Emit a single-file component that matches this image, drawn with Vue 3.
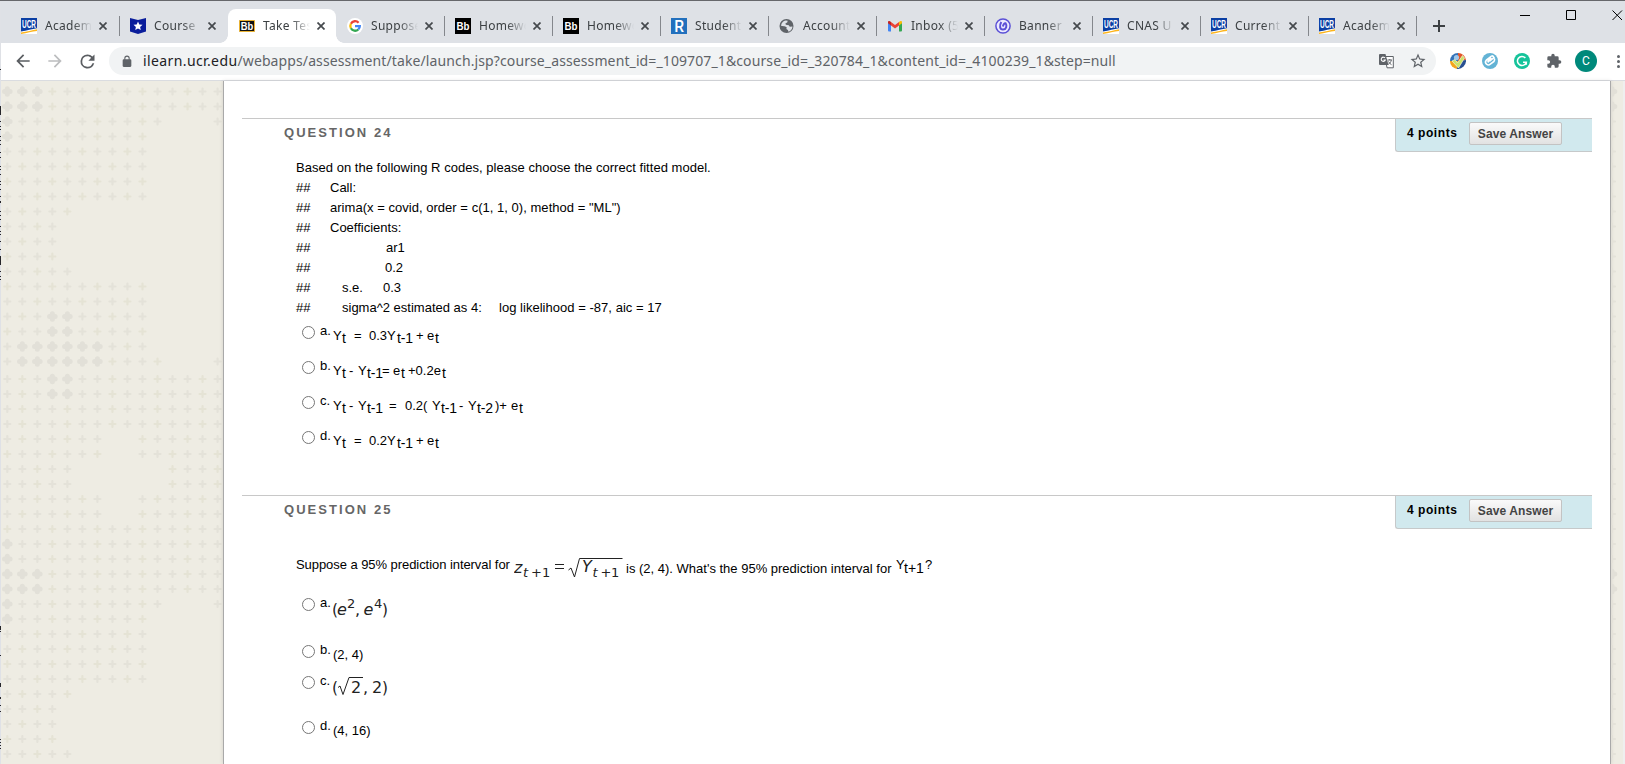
<script setup>
import { ref } from "vue";

const tabs = [
  { icon: "ucr", title: "Academic", wide: true },
  { icon: "star", title: "Course", sep: true, wide: true },
  { icon: "bbActive", title: "Take Test", active: true },
  { icon: "google", title: "Suppose" },
  { icon: "bb", title: "Homework", sep: true },
  { icon: "bb", title: "Homework", sep: true },
  { icon: "r", title: "Student", sep: true },
  { icon: "globe", title: "Account", sep: true },
  { icon: "gmail", title: "Inbox (5)", sep: true },
  { icon: "banner", title: "Banner", sep: true },
  { icon: "ucr", title: "CNAS U", sep: true },
  { icon: "ucr", title: "Current", sep: true },
  { icon: "ucr", title: "Academic", sep: true, last: true },
];

// background ornament: "o" is a large flower, "+" a small one
const full = "+".repeat(15);
const ten = "+".repeat(10);
const topRows = [
  "ooo++++++++++++", "ooo++++++++++++", "o++++++++++...+", "o+++++++++",
  ten, ten, ten, ten, "+++++", "++++", "++++", "++++", "+++++", ten, ten,
  "+++oo+++++", "+++oo+++++", "+oooooo+++", "+oooooo++++...+",
];
const bottomRows = [
  "+++oo++++++++++", "+++oo++++++++++", full, full, "+++++++..++++++", "+++++++..++++++",
  "+++++......++++", "+++++......++++", "+++++++..++++++", "+++++++..++++++", full,
  "o++++++++++++++", "o++++++++++++++", "ooo++++++++++++", "ooo++++++++++++",
  "o++++++++++...+", "o+++++++++", ten, ten, ten, ten, "+++++", "++++", "++++", "++++", "+++++",
];

function place(rows, startY) {
  const list = [];
  rows.forEach((row, r) => {
    [...row].forEach((c, i) => {
      if (c !== ".") list.push({ x: 6.3 + i * 15.02, y: startY + r * 15, big: c === "o" });
    });
  });
  return list;
}

const flowers = [...place(topRows, 10.5), ...place(bottomRows, 298)];
const edgeFlowers = [...topRows.map((_, i) => 10.5 + i * 15), ...bottomRows.map((_, i) => 298 + i * 15)].map(
  (y, i) => ({ y, big: [0, 1, 32, 33].includes(i) })
);

// [y, height] of the marks showing at the left window edge
const marks = [
  [69, 1], [106, 9], [121, 1], [126, 1], [129, 1], [136, 1], [140, 1], [144, 1], [152, 1], [157, 1],
  [166, 1], [169, 1], [174, 1], [181, 1], [184, 1], [189, 1], [196, 1], [201, 2], [211, 1], [215, 1],
  [219, 1], [226, 1], [231, 1], [234, 1], [241, 1], [249, 1], [256, 9], [271, 1], [276, 1], [279, 1],
  [626, 4], [631, 1], [655, 1], [683, 4], [697, 2], [705, 1], [711, 1], [739, 1], [742, 1], [745, 1], [748, 1],
];

// each piece starts x pixels after the line's left edge
const output = [
  [{ t: "Call:", x: 34 }],
  [{ t: 'arima(x = covid, order = c(1, 1, 0), method = "ML")', x: 34, loose: true }],
  [{ t: "Coefficients:", x: 34 }],
  [{ t: "ar1", x: 90 }],
  [{ t: "0.2", x: 89 }],
  [{ t: "s.e.", x: 46 }, { t: "0.3", x: 87 }],
  [{ t: "sigma^2 estimated as 4:", x: 46 }, { t: "log likelihood = -87, aic = 17", x: 203, loose: true }],
];

const models = [
  {
    key: "a",
    parts: [
      { t: "Y", w: 9 }, { t: "t", w: 12, sub: true }, { t: "=", w: 15 }, { t: "0.3Y", w: 28 },
      { t: "t-1", w: 19, sub: true }, { t: "+", w: 11 }, { t: "e", w: 8 }, { t: "t", w: 6, sub: true },
    ],
  },
  {
    key: "b",
    parts: [
      { t: "Y", w: 9 }, { t: "t", w: 7, sub: true }, { t: "-", w: 9 }, { t: "Y", w: 9 },
      { t: "t-1", w: 15, sub: true }, { t: "=", w: 11 }, { t: "e", w: 8 }, { t: "t", w: 7, sub: true },
      { t: "+0.2e", w: 34 }, { t: "t", w: 6, sub: true },
    ],
  },
  {
    key: "c",
    parts: [
      { t: "Y", w: 9 }, { t: "t", w: 7, sub: true }, { t: "-", w: 9 }, { t: "Y", w: 9 },
      { t: "t-1", w: 22, sub: true }, { t: "=", w: 16 }, { t: "0.2(", w: 27 }, { t: "Y", w: 9 },
      { t: "t-1", w: 18, sub: true }, { t: "-", w: 9 }, { t: "Y", w: 9 }, { t: "t-2", w: 18, sub: true },
      { t: ")+", w: 16 }, { t: "e", w: 8 }, { t: "t", w: 6, sub: true },
    ],
  },
  {
    key: "d",
    parts: [
      { t: "Y", w: 9 }, { t: "t", w: 12, sub: true }, { t: "=", w: 15 }, { t: "0.2Y", w: 28 },
      { t: "t-1", w: 19, sub: true }, { t: "+", w: 11 }, { t: "e", w: 8 }, { t: "t", w: 6, sub: true },
    ],
  },
];

const answer24 = ref("");
const answer25 = ref("");
</script>

<template>
  <div class="window">
    <!-- tab strip -->
    <div class="tab-strip">
      <div
        v-for="(tab, i) in tabs"
        :key="i"
        class="tab"
        :class="{ active: tab.active, divided: tab.sep, wide: tab.wide, last: tab.last }"
      >
        <svg class="favicon" viewBox="0 0 16 16">
          <template v-if="tab.icon === 'ucr'">
            <path fill="#fff" d="M0 0h16v16H0z" />
            <path fill="#0b3fa4" d="M0 0h16v10.3C11 11 6 12.500 0 13.500z" />
            <path fill="#fdb51c" d="M16 11.300V13C11 13.500 6 15 0 16v-1.500C6 13.500 11 12.500 16 11.300z" />
            <text x="1" y="7.400" transform="scale(1 1.300)" textLength="14" lengthAdjust="spacingAndGlyphs" class="ucr">UCR</text>
          </template>
          <template v-else-if="tab.icon === 'star'">
            <path fill="#0a1d9b" d="M0 0l8 2 8-2v13.500L8 16l-8-2.500z" />
            <path fill="#fff" d="M8 3.500l1.300 3 3.200.300-2.400 2.100.7 3.200L8 10.400l-2.800 1.700.7-3.200-2.400-2.100 3.200-.3z" />
          </template>
          <template v-else-if="tab.icon === 'bbActive'">
            <path fill="#111" stroke="#e9b233" d="M.5 2.500h15v11H.5z" />
            <text x="1.800" y="11.700" textLength="12.500" lengthAdjust="spacingAndGlyphs" class="bb">Bb</text>
          </template>
          <template v-else-if="tab.icon === 'google'">
            <circle cx="8" cy="8" r="8" fill="#fff" />
            <g fill="none" stroke-width="2.300">
              <path stroke="#ea4335" d="M3.900 5.700A4.800 4.800 0 0 1 11.600 4.700" />
              <path stroke="#fbbc05" d="M3.900 10.300a4.800 4.800 0 0 1 0-4.600" />
              <path stroke="#34a853" d="M11.300 11.500a4.800 4.800 0 0 1-7.400-1.200" />
              <path stroke="#4285f4" d="M8 8.200h4.800a4.800 4.800 0 0 1-1.500 3.300" />
            </g>
          </template>
          <template v-else-if="tab.icon === 'bb'">
            <path d="M0 0h16v16H0z" />
            <text x="1.500" y="12" textLength="13" lengthAdjust="spacingAndGlyphs" class="bb">Bb</text>
          </template>
          <template v-else-if="tab.icon === 'r'">
            <path fill="#2270bd" d="M0 0h16v16H0z" />
            <text x="3.500" y="14" textLength="9.500" lengthAdjust="spacingAndGlyphs" class="r">R</text>
          </template>
          <template v-else-if="tab.icon === 'globe'">
            <circle cx="7.500" cy="8" r="7" fill="#5f6368" />
            <path fill="#dee1e6" d="M2 7.800c.3-2.700 2.200-4.800 4.700-5.200l2 .2-.5 1.700-1.700.8.300 1.400 3 .5 1 1.600 2.700-.300c0 2.600-1.800 4.600-4 5.200l-.6-1.800-1.500-1 .3-1.700-1.800-.8z" />
            <path fill="#5f6368" d="M3.800 8.800h2.600l.4 2-1 .8z" />
          </template>
          <template v-else-if="tab.icon === 'gmail'">
            <path fill="#4285f4" d="M1 4.500l3 2.300V13.500H2q-1 0-1-1z" />
            <path fill="#34a853" d="M12 6.800l3-2.300v8q0 1-1 1h-2z" />
            <path fill="#ea4335" d="M4 4l4 3 4-3v3.500L8 10.500 4 7.500z" />
            <path fill="#c5221f" d="M1 4.500C1 2.700 2.700 2.700 4 4v3.500l-3-2.200z" />
            <path fill="#fbbc04" d="M15 4.500C15 2.700 13.300 2.700 12 4v3.500l3-2.200z" />
          </template>
          <template v-else>
            <circle cx="8" cy="8" r="7.100" fill="#eceaff" stroke="#5b50d6" stroke-width="1.500" />
            <path fill="none" stroke="#5b50d6" stroke-width="2" d="M6.300 4C4.200 7.500 4.700 11.700 8 11.600c3.300-.1 4.300-3.800 2.600-6.300C9.300 5 8.300 6.500 7.900 8.500" />
          </template>
        </svg>
        <span class="tab-title">{{ tab.title }}</span>
        <svg class="close" viewBox="0 0 8 8"><path d="M.5.5l7 7m0-7l-7 7" /></svg>
      </div>
      <svg class="new-tab" viewBox="0 0 12 12"><path d="M6 0v12M0 6h12" /></svg>
      <svg class="win-buttons" viewBox="0 0 103 12">
        <path d="M0 6.500h10M46.500 1.500h9v9h-9zM92.500 1.500l9.500 9.500m0-9.500l-9.500 9.500" />
      </svg>
    </div>

    <!-- toolbar -->
    <div class="toolbar">
      <svg class="nav back" viewBox="0 0 24 24"><path d="M20 11H7.830l5.590-5.590L12 4l-8 8 8 8 1.410-1.410L7.830 13H20z" /></svg>
      <svg class="nav forward" viewBox="0 0 24 24"><path d="M4 11h12.170l-5.590-5.590L12 4l8 8-8 8-1.410-1.410L16.170 13H4z" /></svg>
      <svg class="nav reload" viewBox="0 0 24 24">
        <path d="M17.650 6.350A7.960 7.960 0 0 0 12 4a8 8 0 1 0 7.730 10h-2.080A6 6 0 1 1 12 6c1.660 0 3.140.690 4.220 1.780L13 11h7V4z" />
      </svg>
      <div class="omnibox">
        <svg class="lock" viewBox="0 0 24 24">
          <path d="M18 8h-1V6A5 5 0 0 0 7 6v2H6a2 2 0 0 0-2 2v10c0 1.100.900 2 2 2h12a2 2 0 0 0 2-2V10a2 2 0 0 0-2-2zM9 6a3 3 0 0 1 6 0v2H9z" />
        </svg>
        <span class="url"><span class="host">ilearn.ucr.edu</span>/webapps/assessment/take/launch.jsp?course_assessment_id=_109707_1&amp;course_id=_320784_1&amp;content_id=_4100239_1&amp;step=null</span>
        <svg class="translate" viewBox="0 0 15 15">
          <path fill="#fff" stroke="#5f6368" d="M6 2.500h8.300v11.300H8z" />
          <path fill="#5f6368" d="M1 0h5.500l3 11H1q-1 0-1-1V1q0-1 1-1z" />
          <path fill="none" stroke="#fff" stroke-width="1.100" d="M6 4a2.100 2.100 0 1 0 .3 2H4.500" />
          <path fill="none" stroke="#5f6368" d="M8.500 6h4.500M10.800 5v1M12.300 6.200c-.5 2-1.500 3.300-3 4M9.500 7.500c.7 1.500 1.800 2.500 3 3.200" />
        </svg>
        <svg class="bookmark" viewBox="0 0 24 24">
          <path d="M22 9.240l-7.190-.620L12 2 9.190 8.630 2 9.240l5.460 4.730L5.820 21 12 17.270 18.180 21l-1.630-7.030zM12 15.400l-3.760 2.270 1-4.280-3.320-2.880 4.380-.380L12 6.100l1.710 4.040 4.380.380-3.320 2.880 1 4.280z" />
        </svg>
      </div>
      <div class="extensions">
        <svg viewBox="0 0 16 16">
          <path fill="#3372b8" d="M8 0A8 8 0 0 0 0 8l8 1z" />
          <path fill="#e2562b" d="M8 0a8 8 0 0 1 8 7L8 9z" />
          <path fill="#f3a51e" d="M0 8a8 8 0 0 0 7 8l2-8z" />
          <path fill="#284f91" d="M16 7a8.500 8.500 0 0 1-9 9l1-8z" />
          <circle cx="6.500" cy="4.500" r="2.600" fill="#9fc8ea" />
          <path fill="#c9e36a" stroke="#f7f9d8" stroke-width=".7" d="M2 8l3-1.500 2.500 3.500L12.500 2.500l2 2.500L8.500 15z" />
        </svg>
        <svg viewBox="0 0 16 16">
          <circle cx="8" cy="8" r="8" fill="#63b3d5" />
          <path fill="none" stroke="#fff" stroke-width="1.600" d="M9.500 3L4.300 7.200q-1.800 2 .2 4 2 1.500 3.800 0L12.500 8M9.500 3q1.500-.5 2.500 1.500L7.300 8.500M12.300 5.500q.8 1.500-.3 2.500M9.500 5L6.300 7.500q-.8 1.200.5 1.800" />
        </svg>
        <svg viewBox="0 0 16 16">
          <circle cx="8" cy="8" r="8" fill="#15c39a" />
          <path fill="none" stroke="#fff" stroke-width="1.500" d="M11.300 4.900A4.500 4.500 0 1 0 12.300 9.200H9M12.300 8.500v3.300" />
        </svg>
        <svg viewBox="0 0 24 24">
          <path fill="#5f6368" d="M20.500 11H19V7a2 2 0 0 0-2-2h-4V3.500a2.500 2.500 0 0 0-5 0V5H4a2 2 0 0 0-2 2v3.800h1.500a2.700 2.700 0 0 1 0 5.400H2V20a2 2 0 0 0 2 2h3.800v-1.500a2.700 2.700 0 0 1 5.400 0V22H17a2 2 0 0 0 2-2v-4h1.500a2.500 2.500 0 0 0 0-5z" />
        </svg>
      </div>
      <div class="avatar">C</div>
      <div class="menu"><i></i><i></i><i></i></div>
    </div>

    <!-- page -->
    <div class="page">
      <svg class="ornament" viewBox="0 0 222 683">
        <template v-for="(f, i) in flowers" :key="i">
          <path v-if="f.big" class="big" :transform="`translate(${f.x} ${f.y})`" d="M0-2.800v5.600M-2.800 0h5.600" />
          <path v-else class="small" :class="{ cool: i % 3 }" :transform="`translate(${f.x} ${f.y})`" d="M0-3v6M-3 0h6" />
        </template>
      </svg>

      <main class="content">
        <section class="question">
          <header>
            <h3>QUESTION 24</h3>
            <div class="points"><b>4 points</b><button>Save Answer</button></div>
          </header>
          <div class="body">
            <p class="line loose">Based on the following R codes, please choose the correct fitted model.</p>
            <p v-for="(line, i) in output" :key="i" class="line">
              <span class="hash">##</span>
              <span
                v-for="part in line"
                :key="part.t"
                class="part"
                :class="{ loose: part.loose }"
                :style="{ left: part.x + 'px' }"
              >{{ part.t }}</span>
            </p>
            <div class="models">
              <label v-for="m in models" :key="m.key" class="option">
                <input v-model="answer24" type="radio" name="q24" :value="m.key" />
                <span class="letter">{{ m.key }}.</span>
                <span class="text formula">
                  <span v-for="(p, i) in m.parts" :key="i" :class="{ sub: p.sub }" :style="{ width: p.w + 'px' }">{{ p.t }}</span>
                </span>
              </label>
            </div>
          </div>
        </section>

        <section class="question">
          <header>
            <h3>QUESTION 25</h3>
            <div class="points"><b>4 points</b><button>Save Answer</button></div>
          </header>
          <div class="body">
            <div class="stem">
              <span class="before">Suppose a 95% prediction interval for</span>
              <svg class="math equation" viewBox="0 0 112 26">
                <text x="0" y="17" class="it base">z</text>
                <text x="9" y="21" class="it small-math">t</text>
                <text x="17" y="21" class="small-math">+</text>
                <text x="28" y="21" class="small-math">1</text>
                <path d="M41 8.500h9M41 12.500h9" />
                <path d="M54.500 14l2.500-2 3.500 9L65.500 2.500h43" />
                <text x="68" y="16" class="it base">Y</text>
                <text x="78.500" y="21" class="it small-math">t</text>
                <text x="86.500" y="21" class="small-math">+</text>
                <text x="97" y="21" class="small-math">1</text>
              </svg>
              <span class="after">is (2, 4). What's the 95% prediction interval for</span>
              <span class="raised">Y</span><span class="after plain">t+1</span><span class="raised mark">?</span>
            </div>
            <label class="option tall">
              <input v-model="answer25" type="radio" name="q25" value="a" />
              <span class="letter">a.</span>
              <svg class="math choice" viewBox="0 0 60 26">
                <text x="-1" y="18" class="base" textLength="6" lengthAdjust="spacingAndGlyphs">(</text>
                <text x="4" y="18" class="it base">e</text>
                <text x="14" y="11" class="small-math">2</text>
                <text x="22" y="18" class="base">,</text>
                <text x="30.500" y="18" class="it base">e</text>
                <text x="41" y="11" class="small-math">4</text>
                <text x="49" y="18" class="base" textLength="6" lengthAdjust="spacingAndGlyphs">)</text>
              </svg>
            </label>
            <label class="option short">
              <input v-model="answer25" type="radio" name="q25" value="b" />
              <span class="letter">b.</span>
              <span class="text">(2, 4)</span>
            </label>
            <label class="option mid">
              <input v-model="answer25" type="radio" name="q25" value="c" />
              <span class="letter">c.</span>
              <svg class="math choice" viewBox="0 0 60 26">
                <text x="-1" y="18" class="base" textLength="6" lengthAdjust="spacingAndGlyphs">(</text>
                <path d="M5 12.500l2-1.500 3 8.500L16 2.500h14" />
                <text x="18" y="18" class="base">2</text>
                <text x="30" y="18" class="base">,</text>
                <text x="39" y="18" class="base">2</text>
                <text x="49" y="18" class="base" textLength="6" lengthAdjust="spacingAndGlyphs">)</text>
              </svg>
            </label>
            <label class="option">
              <input v-model="answer25" type="radio" name="q25" value="d" />
              <span class="letter">d.</span>
              <span class="text">(4, 16)</span>
            </label>
          </div>
        </section>
      </main>

      <svg class="edge" viewBox="0 0 12 683">
        <template v-for="f in edgeFlowers" :key="f.y">
          <path v-if="f.big" class="big" :transform="`translate(1 ${f.y})`" d="M0-2.800v5.600M-2.800 0h5.600" />
          <path v-else class="small cool" :transform="`translate(1 ${f.y})`" d="M0-3v6M-3 0h6" />
        </template>
      </svg>
    </div>

    <svg class="left-edge" viewBox="0 0 1 764">
      <rect v-for="m in marks" :key="m[0]" x="0" :y="m[0]" width="1" :height="m[1]" />
    </svg>
  </div>
</template>

<style>
body {
  margin: 0;
  overflow: hidden;
}
</style>

<style scoped>
.window {
  position: relative;
  width: 1625px;
  height: 764px;
  overflow: hidden;
  box-sizing: border-box;
  border-top: 1px solid #66676b;
  background: #fff;
  font-family: "Liberation Sans", Arial, sans-serif;
  font-size: 13px;
  color: #000;
}

svg {
  display: block;
  flex: none;
}

/* tabs */
.tab-strip {
  display: flex;
  height: 42px;
  padding-left: 10px;
  background: #dee1e6;
}

.tab {
  position: relative;
  display: flex;
  flex: none;
  width: 108px;
  height: 34px;
  margin-top: 8px;
  padding: 9px 0 0 11px;
  box-sizing: border-box;
}

.tab.wide {
  width: 109px;
}

.tab.divided::before,
.tab.last::after {
  content: "";
  position: absolute;
  left: 0;
  top: 7px;
  width: 1px;
  height: 20px;
  background: #84878c;
}

.tab.last::after {
  left: 108px;
}

.tab.active {
  background: #fff;
  border-radius: 8px 8px 0 0;
}

.tab.active::before,
.tab.active::after {
  content: "";
  position: absolute;
  bottom: 0;
  width: 8px;
  height: 8px;
}

.tab.active::before {
  left: -8px;
  background: radial-gradient(circle at 0 0, transparent 7.5px, #fff 8px);
}

.tab.active::after {
  right: -8px;
  background: radial-gradient(circle at 100% 0, transparent 7.5px, #fff 8px);
}

.favicon {
  width: 16px;
  height: 16px;
}

.ucr {
  font: bold 8px "Liberation Sans", sans-serif;
  fill: #fff;
}

.bb {
  font: bold 10.5px "Liberation Sans", sans-serif;
  fill: #fff;
}

.r {
  font: bold 16px "Liberation Sans", sans-serif;
  fill: #fff;
}

.tab-title {
  width: 47px;
  margin-left: 8px;
  overflow: hidden;
  white-space: nowrap;
  font: 12px/16px "Noto Sans", "Open Sans", sans-serif;
  letter-spacing: 0.3px;
  color: #3c4043;
  mask-image: linear-gradient(90deg, #000 60%, transparent);
}

.close {
  width: 8px;
  height: 8px;
  margin: 4px 0 0 7px;
}

.close path {
  stroke: #45494d;
  stroke-width: 1.7;
}

.new-tab {
  width: 12px;
  height: 12px;
  margin: 19px 0 0 17px;
}

.new-tab path {
  stroke: #3c4043;
  stroke-width: 2;
}

.win-buttons {
  width: 103px;
  height: 12px;
  margin: 8px 0 0 75px;
}

.win-buttons path {
  fill: none;
  stroke: #000;
}

/* toolbar */
.toolbar {
  display: flex;
  align-items: center;
  height: 38px;
  box-sizing: border-box;
  padding: 0 0 1px 13px;
  border-bottom: 1px solid #dadce0;
  background: #fff;
}

.nav {
  width: 20px;
  height: 20px;
  margin-right: 12px;
  fill: #5a5d61;
}

.forward {
  fill: #bcbdbf;
}

.reload {
  width: 21px;
  height: 21px;
  margin-right: 11px;
}

.omnibox {
  display: flex;
  align-items: center;
  width: 1327px;
  height: 28px;
  box-sizing: border-box;
  padding: 0 9px 0 11px;
  border-radius: 14px;
  background: #f1f3f4;
}

.lock {
  width: 14px;
  height: 13px;
  fill: #5f6368;
}

.url {
  flex: 1;
  margin-left: 9px;
  white-space: nowrap;
  font: 14px/28px "Noto Sans", "Open Sans", sans-serif;
  letter-spacing: 0.11px;
  color: #5f6368;
}

.host {
  letter-spacing: 0.39px;
  color: #202124;
}

.translate {
  width: 15px;
  height: 15px;
}

.bookmark {
  width: 18px;
  height: 18px;
  margin-left: 15px;
  fill: #5f6368;
}

.extensions {
  display: flex;
  gap: 16px;
  margin-left: 14px;
}

.extensions svg {
  width: 16px;
  height: 16px;
}

.avatar {
  width: 22px;
  height: 22px;
  margin-left: 13px;
  border-radius: 50%;
  background: #00897b;
  color: #fff;
  font: 12px/22px Roboto, sans-serif;
  text-align: center;
}

.menu {
  display: grid;
  gap: 2px;
  margin-left: 20px;
}

.menu i {
  width: 3px;
  height: 3px;
  border-radius: 50%;
  background: #5f6368;
}

/* page */
.page {
  display: flex;
  height: 683px;
  background: #eeece3;
}

.ornament {
  width: 222px;
  height: 683px;
  margin-left: 1px;
}

.small,
.big {
  fill: none;
  stroke-linecap: round;
}

.small {
  stroke: #e5e3d5;
  stroke-width: 2.2;
}

.small.cool {
  stroke: #e4e2d9;
}

.big {
  stroke: #e2e0d8;
  stroke-width: 5;
}

.content {
  width: 1368px;
  padding: 37px 0 0 18px;
  border: solid #a9a9a9;
  border-width: 0 1px;
  background: #fff;
  box-shadow: 0 0 4px rgba(0, 0, 0, 0.12);
}

.edge {
  width: 12px;
  height: 683px;
  border-right: 2px solid #efefef;
}

.question {
  width: 1350px;
  height: 377px;
}

header {
  display: flex;
  justify-content: space-between;
  height: 39px;
  box-sizing: border-box;
  border-top: 1px solid #c8c8c8;
}

h3 {
  margin: 4px 0 0 42px;
  font-size: 13px;
  line-height: 20px;
  letter-spacing: 2.05px;
  color: #666;
}

.points {
  display: flex;
  align-items: flex-start;
  width: 197px;
  height: 33px;
  box-sizing: border-box;
  padding: 3px 0 0 11px;
  border: solid #c6c9ca;
  border-width: 0 0 1px 1px;
  border-radius: 0 0 0 3px;
  background: #d1e9ee;
}

.points b {
  width: 62px;
  padding-top: 1px;
  font-size: 12px;
  line-height: 20px;
  letter-spacing: 0.55px;
  white-space: nowrap;
}

button {
  width: 93px;
  height: 23px;
  padding: 0;
  border: 1px solid #c3c3c3;
  border-radius: 2px;
  background: linear-gradient(#fafafa, #e2e2e2);
  font: bold 12px "Liberation Sans", sans-serif;
  letter-spacing: 0.1px;
  color: #444;
}

.body {
  padding: 1px 0 0 54px;
}

.line {
  position: relative;
  height: 20px;
  margin: 0;
  line-height: 20px;
  white-space: nowrap;
}

.part {
  position: absolute;
  top: 0;
}

.loose {
  letter-spacing: 0.03px;
}

.models {
  margin-top: -3px;
}

.option {
  display: flex;
  align-items: flex-start;
  height: 35px;
  line-height: 20px;
}

.option.tall {
  height: 47px;
}

.option.short {
  height: 31px;
}

.option.mid {
  height: 45px;
}

input {
  width: 13px;
  height: 13px;
  margin: 11px 5px 0 6px;
}

.letter {
  width: 14px;
  margin-top: 6px;
}

.text {
  margin: 11px 0 0 -1px;
}

.formula {
  display: flex;
  white-space: nowrap;
}

.sub {
  position: relative;
  top: 2px;
  font-size: 14px;
  letter-spacing: -0.2px;
}

.stem {
  display: flex;
  align-items: flex-start;
  height: 52px;
  line-height: 20px;
  white-space: nowrap;
}

.before {
  width: 218px;
  margin-top: 20px;
  letter-spacing: -0.06px;
}

.after {
  width: 272px;
  margin-top: 24px;
}

.raised {
  width: 8px;
  margin: 20px 0 0 -2px;
}

.plain {
  width: 22px;
  margin-top: 23px;
  font-size: 14px;
}

.raised.mark {
  margin-left: -1px;
}

.math path {
  fill: none;
  stroke: #222;
}

.math text {
  font-family: "DejaVu Sans", sans-serif;
  fill: #222;
}

.math .base {
  font-size: 16px;
}

.math .small-math {
  font-size: 13px;
}

.math .it {
  font-style: italic;
}

.equation {
  width: 112px;
  height: 26px;
  margin-top: 21px;
}

.choice {
  width: 60px;
  height: 26px;
  margin: 10px 0 0 -1px;
}

.left-edge {
  position: absolute;
  left: 0;
  top: -1px;
  width: 1px;
  height: 764px;
  background: #dfe1e6;
}

.left-edge rect {
  fill: #26262a;
}
</style>
